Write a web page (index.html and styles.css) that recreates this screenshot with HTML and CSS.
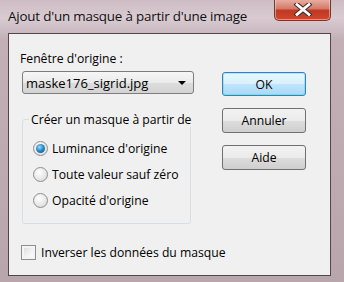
FILE: index.html
```html
<!DOCTYPE html>
<html>
<head>
  <meta charset="utf-8">
  <link rel="stylesheet" href="styles.css">
</head>
<body>
  <div class="window">
    <div class="titlebar">
      <span class="title">Ajout d'un masque à partir d'une image</span>
      <button class="close">
        <svg width="20" height="13" viewBox="0 0 20 13">
          <path d="M4 1.5 L16 11.5 M16 1.5 L4 11.5" stroke="#3a2a2a" stroke-width="4.8" stroke-linecap="square"/>
          <path d="M4 1.5 L16 11.5 M16 1.5 L4 11.5" stroke="#fff" stroke-width="2.8" stroke-linecap="square"/>
        </svg>
      </button>
    </div>

    <div class="client">
      <div class="main">
        <div class="left">
          <div class="label">Fenêtre d'origine :</div>
          <div class="select">
            <span>maske176_sigrid.jpg</span>
            <span class="arrow"></span>
          </div>

          <div class="group">
            <div class="group-title">Créer un masque à partir de</div>
            <label class="radio"><span class="dot checked"></span>Luminance d'origine</label>
            <label class="radio"><span class="dot"></span>Toute valeur sauf zéro</label>
            <label class="radio"><span class="dot"></span>Opacité d'origine</label>
          </div>
        </div>

        <div class="buttons">
          <button class="btn default">OK</button>
          <button class="btn">Annuler</button>
          <button class="btn">Aide</button>
        </div>
      </div>

      <label class="check"><span class="box"></span>Inverser les données du masque</label>
    </div>
  </div>
</body>
</html>
```

FILE: styles.css
```css
* {
  margin: 0;
  padding: 0;
  box-sizing: border-box;
}

body {
  width: 344px;
  height: 282px;
  overflow: hidden;
  font-family: "Open Sans", "Noto Sans", sans-serif;
  color: #000;
}

.window {
  width: 344px;
  height: 282px;
  display: flex;
  flex-direction: column;
  background: linear-gradient(to bottom, #cdbcc3 0%, #d9cbd1 18px, #c3b0b7 40px, #b9a6ad 100%);
  padding: 0 13px 6px 8px;
}

.titlebar {
  height: 33px;
  display: flex;
  align-items: flex-start;
  justify-content: space-between;
}

.title {
  font-size: 13.4px;
  letter-spacing: -0.2px;
  white-space: nowrap;
  margin-top: 7px;
  color: #111;
}

.close {
  width: 57px;
  height: 22px;
  margin-top: -1px;
  border: 1px solid #6b3a34;
  border-top: none;
  border-radius: 0 0 5px 5px;
  background: linear-gradient(to bottom, #e9b3a6 0%, #d7796a 45%, #c2371f 55%, #cb4a30 100%);
  box-shadow: inset 0 0 0 1px rgba(255, 220, 210, 0.5);
  display: flex;
  align-items: center;
  justify-content: center;
}

.client {
  flex: 1;
  background: #f0f0f0;
  border: 1px solid #4f474b;
  padding: 10px 0 0 11px;
  font-size: 12.2px;
}

.main {
  display: flex;
}

.left {
  width: 174px;
}

.label {
  height: 17px;
  margin-top: 6px;
  line-height: 17px;
}

.select {
  margin: 4px 0 0 2px;
  width: 172px;
  height: 23px;
  border: 1px solid #7d7d7d;
  border-radius: 3px;
  background: linear-gradient(to bottom, #f6f6f6 0%, #ebebeb 50%, #dddddd 51%, #d3d3d3 100%);
  display: flex;
  align-items: center;
  justify-content: space-between;
  padding: 0 7px 0 3px;
  font-size: 13px;
}

.arrow {
  width: 0;
  height: 0;
  border-left: 4px solid transparent;
  border-right: 4px solid transparent;
  border-top: 4px solid #000;
}

.group {
  margin: 25px 0 0 2px;
  width: 169px;
  height: 105px;
  border: 1px solid #d5dfe5;
  border-radius: 3px;
  padding: 0 0 0 10px;
}

.group-title {
  width: fit-content;
  margin: -7px 0 8px -4px;
  padding: 0 2px;
  line-height: 14px;
  white-space: nowrap;
  background: #f0f0f0;
}

.radio {
  display: flex;
  align-items: center;
  height: 26px;
  gap: 4px;
}

.dot {
  width: 15px;
  height: 15px;
  border-radius: 50%;
  border: 1px solid #8e8f8f;
  background: radial-gradient(circle at 40% 35%, #fff 0%, #e6e6e6 60%, #cfcfcf 100%);
  display: flex;
  align-items: center;
  justify-content: center;
}

.dot.checked::after {
  content: '';
  width: 9px;
  height: 9px;
  border-radius: 50%;
  background: radial-gradient(circle at 40% 35%, #a6dcf5 0%, #2a8ccc 45%, #0b3f6e 100%);
}

.buttons {
  margin: 28px 0 0 28px;
  display: flex;
  flex-direction: column;
  gap: 12px;
}

.btn {
  width: 84px;
  height: 25px;
  border: 1px solid #707070;
  border-radius: 3px;
  background: linear-gradient(to bottom, #f2f2f2 0%, #ebebeb 50%, #dddddd 51%, #cfcfcf 100%);
  font-family: inherit;
  font-size: 12.2px;
  color: #000;
}

.btn.default {
  height: 24px;
  border-color: #3c7fb1;
  background: linear-gradient(to bottom, #eaf6fd 0%, #d9f0fc 50%, #bee6fd 51%, #a7d9f5 100%);
  box-shadow: inset 0 0 0 1px #48d1ff66;
}

.check {
  display: flex;
  align-items: center;
  gap: 5px;
  margin: 20px 0 0 1px;
  height: 16px;
}

.box {
  width: 15px;
  height: 15px;
  border: 1px solid #8e8f8f;
  background: linear-gradient(135deg, #d8d8d8 0%, #f4f4f4 60%, #fff 100%);
  box-shadow: inset 0 0 0 2px #f4f4f4;
}
```
